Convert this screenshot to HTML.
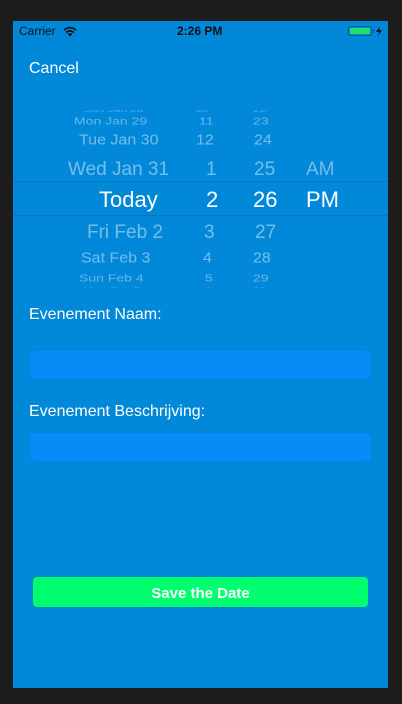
<!DOCTYPE html>
<html><head><meta charset="utf-8"><style>
*{margin:0;padding:0;box-sizing:border-box}
body{width:402px;height:704px;background:#1c1c1c;position:relative;overflow:hidden;font-family:"Liberation Sans",sans-serif}
#s{position:absolute;left:13px;top:21px;width:375px;height:667px;background:#0288d9;overflow:hidden}
.a{position:absolute;white-space:nowrap;color:#fff}
.p{position:absolute;white-space:nowrap;color:#fff;line-height:1}
.line{position:absolute;left:0;width:375px;height:1px;background:#0a74b8}
.f{position:absolute;left:16px;width:343px;height:30px;background:#058cf7;border:1px solid #0880dd;border-radius:5px}
</style></head><body>
<div id="s">
 <div class="a" style="left:6px;top:3px;font-size:12px;color:#111">Carrier</div>
 <svg class="a" style="left:50px;top:5px" width="14" height="11" viewBox="0 0 14 11"><path d="M7 10.5 L4.6 8 A3.4 3.4 0 0 1 9.4 8 Z" fill="#111"/><path d="M3.2 6.5 A5.4 5.4 0 0 1 10.8 6.5" stroke="#111" stroke-width="1.6" fill="none"/><path d="M1 4.2 A8.4 8.4 0 0 1 13 4.2" stroke="#111" stroke-width="1.6" fill="none"/></svg>
 <div class="a" style="left:164px;top:3px;font-size:12px;font-weight:bold;color:#111">2:26 PM</div>
 <div class="a" style="left:335px;top:5px;width:24px;height:10px;border:1px solid #0b5a8a;border-radius:2px;padding:1px"><div style="width:100%;height:100%;background:#1be26a;border-radius:1px"></div></div>
 <div class="a" style="left:360px;top:8px;width:1px;height:4px;background:#0b5a8a"></div>
 <svg class="a" style="left:363px;top:5px" width="6" height="10" viewBox="0 0 6 10"><path d="M4 0 L0 6 H3 L2 10 L6 4 H3 Z" fill="#111"/></svg>

 <div class="a" style="left:16px;top:39px;font-size:16px">Cancel</div>

 <div style="position:absolute;left:0;top:89px;width:375px;height:178px;overflow:hidden">
  <div class="p" style="left:70px;top:-6px;font-size:12px;opacity:.3;transform:scaleY(.55)">Sun Jan 28</div>
  <div class="p" style="left:182px;top:-6px;font-size:12px;opacity:.3;transform:scaleY(.55)">10</div>
  <div class="p" style="left:240px;top:-6px;font-size:12px;opacity:.3;transform:scaleY(.55)">22</div>
  <div class="p" style="left:61px;top:4px;font-size:14px;opacity:.4;transform:scaleY(.72)">Mon Jan 29</div>
  <div class="p" style="left:186px;top:4px;font-size:14px;opacity:.4;transform:scaleY(.72)">11</div>
  <div class="p" style="left:240px;top:4px;font-size:14px;opacity:.4;transform:scaleY(.72)">23</div>
  <div class="p" style="left:66px;top:23px;font-size:16px;opacity:.45;transform:scaleY(.9)">Tue Jan 30</div>
  <div class="p" style="left:183px;top:23px;font-size:16px;opacity:.45;transform:scaleY(.9)">12</div>
  <div class="p" style="left:241px;top:23px;font-size:16px;opacity:.45;transform:scaleY(.9)">24</div>
  <div class="p" style="left:55px;top:50px;font-size:19px;opacity:.45">Wed Jan 31</div>
  <div class="p" style="left:193px;top:50px;font-size:19px;opacity:.45">1</div>
  <div class="p" style="left:241px;top:50px;font-size:19px;opacity:.45">25</div>
  <div class="p" style="left:293px;top:50px;font-size:19px;opacity:.45">AM</div>
  <div class="p" style="left:74px;top:113px;font-size:19px;opacity:.45">Fri Feb 2</div>
  <div class="p" style="left:191px;top:113px;font-size:19px;opacity:.45">3</div>
  <div class="p" style="left:242px;top:113px;font-size:19px;opacity:.45">27</div>
  <div class="p" style="left:68px;top:141px;font-size:16px;opacity:.45;transform:scaleY(.9)">Sat Feb 3</div>
  <div class="p" style="left:190px;top:141px;font-size:16px;opacity:.45;transform:scaleY(.9)">4</div>
  <div class="p" style="left:240px;top:141px;font-size:16px;opacity:.45;transform:scaleY(.9)">28</div>
  <div class="p" style="left:66px;top:161px;font-size:14px;opacity:.4;transform:scaleY(.72)">Sun Feb 4</div>
  <div class="p" style="left:192px;top:161px;font-size:14px;opacity:.4;transform:scaleY(.72)">5</div>
  <div class="p" style="left:240px;top:161px;font-size:14px;opacity:.4;transform:scaleY(.72)">29</div>
  <div class="p" style="left:70px;top:174px;font-size:12px;opacity:.3;transform:scaleY(.55)">Mon Feb 5</div>
  <div class="p" style="left:192px;top:174px;font-size:12px;opacity:.3;transform:scaleY(.55)">6</div>
  <div class="p" style="left:240px;top:174px;font-size:12px;opacity:.3;transform:scaleY(.55)">30</div>
 </div>
 <div class="line" style="top:160px"></div>
 <div class="line" style="top:194px"></div>
 <div class="p" style="left:86px;top:168px;font-size:22px">Today</div>
 <div class="p" style="left:193px;top:168px;font-size:22px">2</div>
 <div class="p" style="left:240px;top:168px;font-size:22px">26</div>
 <div class="p" style="left:293px;top:168px;font-size:22px">PM</div>

 <div class="a" style="left:16px;top:285px;font-size:16px">Evenement Naam:</div>
 <div class="f" style="top:329px"></div>
 <div class="a" style="left:16px;top:382px;font-size:16px">Evenement Beschrijving:</div>
 <div class="f" style="top:411px"></div>

 <div class="a" style="left:20px;top:556px;width:335px;height:30px;background:#00ff6e;border-radius:4px;text-align:center;line-height:30px;padding-top:2px;font-size:15px;font-weight:bold">Save the Date</div>
</div>
</body></html>
